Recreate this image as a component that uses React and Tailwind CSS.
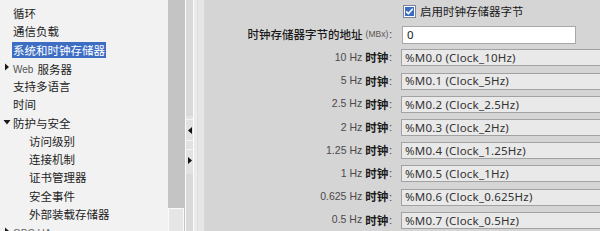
import React from "react";

const cjk = { fontFamily: '"Noto Sans CJK SC", "Noto Sans", sans-serif' };
const lat = { fontFamily: '"Liberation Sans", "Noto Sans CJK SC", sans-serif' };
const val = { fontFamily: '"Noto Sans", "Liberation Sans", sans-serif' };

function Arrow({ dir }) {
  if (dir === "right")
    return (
      <svg width="6" height="8" viewBox="0 0 6 8" className="shrink-0">
        <path d="M1 0.5 L5 4 L1 7.5 Z" fill="#1a1a1a" />
      </svg>
    );
  return (
    <svg width="8" height="6" viewBox="0 0 8 6" className="shrink-0">
      <path d="M0.5 1 L7.5 1 L4 5.5 Z" fill="#1a1a1a" />
    </svg>
  );
}

const tree = [
  { t: "循环", lvl: 1 },
  { t: "通信负载", lvl: 1 },
  { t: "系统和时钟存储器", lvl: 1, sel: true },
  { t: "Web 服务器", lvl: 1, arrow: "right", web: true },
  { t: "支持多语言", lvl: 1 },
  { t: "时间", lvl: 1 },
  { t: "防护与安全", lvl: 1, arrow: "down" },
  { t: "访问级别", lvl: 2 },
  { t: "连接机制", lvl: 2 },
  { t: "证书管理器", lvl: 2 },
  { t: "安全事件", lvl: 2 },
  { t: "外部装载存储器", lvl: 2 },
  { t: "OPC UA", lvl: 1, arrow: "right", opc: true },
];

const clocks = [
  ["10 Hz", "%M0.0 (Clock_10Hz)"],
  ["5 Hz", "%M0.1 (Clock_5Hz)"],
  ["2.5 Hz", "%M0.2 (Clock_2.5Hz)"],
  ["2 Hz", "%M0.3 (Clock_2Hz)"],
  ["1.25 Hz", "%M0.4 (Clock_1.25Hz)"],
  ["1 Hz", "%M0.5 (Clock_1Hz)"],
  ["0.625 Hz", "%M0.6 (Clock_0.625Hz)"],
  ["0.5 Hz", "%M0.7 (Clock_0.5Hz)"],
];

function TreeRow({ item }) {
  return (
    <div className="h-[18.25px] shrink-0 flex items-center whitespace-nowrap">
      <div className="w-[12px] shrink-0 flex justify-center items-center pl-[1px]">
        {item.arrow && <Arrow dir={item.arrow} />}
      </div>
      <div className={item.lvl === 2 ? "pl-[16px]" : ""}>
        {item.sel ? (
          <span
            className="bg-[#3d6ec4] text-white px-[1px] h-[16px] inline-flex items-center text-[11.5px] leading-none whitespace-nowrap"
            style={cjk}
          >
            {item.t}
          </span>
        ) : item.web ? (
          <span className="text-[11.5px] text-[#1e1e1e] leading-none px-[1px] inline-flex items-center whitespace-nowrap" style={cjk}>
            <span className="text-[10px] text-[#555] mr-[4px]" style={lat}>
              Web
            </span>
            服务器
          </span>
        ) : item.opc ? (
          <span className="text-[10px] text-[#666] px-[1px] leading-none" style={lat}>
            OPC UA
          </span>
        ) : (
          <span className="text-[11.5px] text-[#1e1e1e] leading-none px-[1px]" style={cjk}>
            {item.t}
          </span>
        )}
      </div>
    </div>
  );
}

function Label({ latin, cn, small }) {
  return (
    <div className="w-[188px] shrink-0 flex justify-end items-center pr-[1px] whitespace-nowrap">
      {cn && !latin && (
        <span className="text-[11.5px] text-[#1a1a1a] font-medium" style={cjk}>
          {cn}
        </span>
      )}
      {latin && (
        <>
          <span className="text-[10.5px] text-[#4a4a4a] mr-[3px]" style={lat}>
            {latin}
          </span>
          <span className="text-[11.5px] text-[#1a1a1a] font-semibold" style={cjk}>
            时钟
          </span>
        </>
      )}
      {small && (
        <span className="text-[8.5px] text-[#555] ml-[3px]" style={lat}>
          {small}
        </span>
      )}
      <span className="text-[10px] text-[#333] ml-[1px]" style={lat}>
        :
      </span>
    </div>
  );
}

export default function App() {
  return (
    <div className="w-[600px] h-[231px] flex overflow-hidden bg-[#d4d4d4]">
      {/* tree panel */}
      <div className="w-[168px] shrink-0 h-full bg-[#f2f2f2] overflow-hidden pt-[3px] flex flex-col">
        {tree.map((it, i) => (
          <TreeRow key={i} item={it} />
        ))}
      </div>
      {/* scrollbar */}
      <div className="w-[17px] shrink-0 h-full bg-[#c4c4c4] flex flex-col justify-end">
        <div className="h-[23px] w-[16px] border border-b-0 border-[#fafafa] bg-[#e6e6e6]" />
      </div>
      <div className="w-[1px] shrink-0 h-full bg-[#fbfbfb]" />
      {/* splitter */}
      <div className="w-[7px] shrink-0 h-full bg-[#d9d9d9] flex flex-col items-center pt-[116px]">
        <div className="w-[7px] h-[58px] bg-[#e2e2e2] flex flex-col items-center">
          <div className="h-[4px] w-full border-b border-[#f4f4f4]" />
          <div className="h-[20px] flex items-center">
            <svg width="4" height="7" viewBox="0 0 4 7">
              <path d="M4 0 L0 3.5 L4 7 Z" fill="#111" />
            </svg>
          </div>
          <div className="h-[10px] w-full border-t border-b border-[#f4f4f4]" />
          <div className="h-[20px] flex items-center">
            <svg width="4" height="7" viewBox="0 0 4 7">
              <path d="M0 0 L4 3.5 L0 7 Z" fill="#111" />
            </svg>
          </div>
        </div>
      </div>
      <div className="w-[1px] shrink-0 h-full bg-[#fbfbfb]" />
      <div className="w-[11px] shrink-0 h-full bg-[#e4e4e4] flex">
        <div className="w-[3px] h-full bg-[#ebebeb]" />
        <div className="w-[1px] h-full bg-[#dedede]" />
        <div className="flex-1 h-full bg-[#e6e6e6]" />
        <div className="w-[1px] h-full bg-[#d8d8d8]" />
      </div>
      {/* main */}
      <div className="flex-1 min-w-0 h-full bg-[#d5d5d5] flex flex-col overflow-hidden">
        <div className="h-[23.2px] shrink-0 flex items-center">
          <div className="w-[198px] shrink-0" />
          <svg width="13" height="13" viewBox="0 0 13 13" className="shrink-0">
            <rect x="0.5" y="0.5" width="12" height="12" fill="#ffffff" stroke="#7a8698" />
            <rect x="2" y="2" width="9" height="9" fill="#3a6cc0" />
            <path d="M3.2 6.4 L5.4 8.6 L9.8 3.8" stroke="#ffffff" strokeWidth="1.6" fill="none" />
          </svg>
          <span className="ml-[4px] text-[11.5px] text-[#1a1a1a] whitespace-nowrap" style={cjk}>
            启用时钟存储器字节
          </span>
        </div>
        <div className="h-[23.2px] shrink-0 flex items-center">
          <Label cn="时钟存储器字节的地址" small="(MBx)" />
          <div className="ml-[9px] w-[174px] shrink-0 h-[18px] bg-white border border-[#a8a8a8] flex items-center pl-[4px]">
            <span className="text-[11.5px] text-[#222] leading-none" style={val}>
              0
            </span>
          </div>
        </div>
        {clocks.map(([hz, v]) => (
          <div key={hz} className="h-[23.2px] shrink-0 flex items-center">
            <Label latin={hz} />
            <div className="ml-[8px] w-[220px] shrink-0 h-[17px] bg-[#e9e9e9] border border-[#a2a2a2] flex items-center pl-[3px]">
              <span className="text-[11.5px] tracking-[0.2px] leading-none text-[#333] whitespace-nowrap" style={val}>
                {v}
              </span>
            </div>
          </div>
        ))}
      </div>
    </div>
  );
}
